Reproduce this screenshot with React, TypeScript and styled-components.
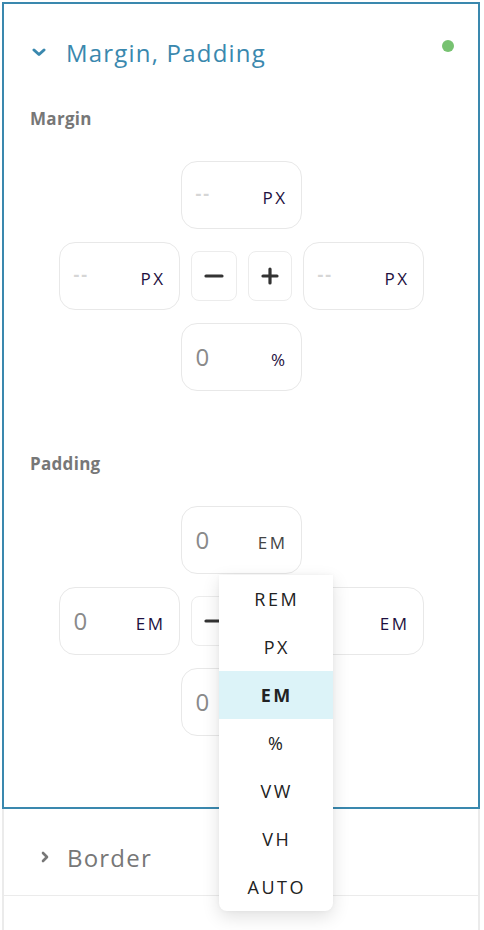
import React from "react";
import styled, { createGlobalStyle } from "styled-components";

const GlobalStyle = createGlobalStyle`
  html, body {
    margin: 0;
    padding: 0;
    background: #fff;
  }
  body {
    font-family: "Open Sans", "Noto Sans", sans-serif;
  }
`;

type Side = { value: string; unit: string; muted?: boolean };

const units = ["REM", "PX", "EM", "%", "VW", "VH", "AUTO"];

function ChevronDown() {
  return (
    <svg width="14" height="10" viewBox="0 0 14 10">
      <polyline points="2,3 7,7.5 12,3" fill="none" stroke="#3a88ae" strokeWidth="3" strokeLinecap="round" strokeLinejoin="round" />
    </svg>
  );
}

function ChevronRight() {
  return (
    <svg width="10" height="14" viewBox="0 0 10 14">
      <polyline points="3,3 7,7 3,11" fill="none" stroke="#777" strokeWidth="2.6" strokeLinecap="round" strokeLinejoin="round" />
    </svg>
  );
}

function ValueBox({ side }: { side: Side }) {
  const empty = side.value === "--";
  return (
    <Box>
      <Value empty={empty}>{side.value}</Value>
      <Unit muted={side.muted}>{side.unit}</Unit>
    </Box>
  );
}

function SpacingControl({ top, left, right, bottom, menu }: { top: Side; left: Side; right: Side; bottom: Side; menu?: boolean }) {
  return (
    <Cross>
      <TopSlot>
        <ValueBox side={top} />
        {menu && (
          <Menu>
            {units.map((u) => (
              <MenuItem key={u} active={u === "EM"}>
                {u}
              </MenuItem>
            ))}
          </Menu>
        )}
      </TopSlot>
      <MiddleRow>
        <ValueBox side={left} />
        <StepButton>
          <svg width="20" height="20" viewBox="0 0 20 20">
            <line x1="2" y1="10" x2="18" y2="10" stroke="#333" strokeWidth="3.2" strokeLinecap="round" />
          </svg>
        </StepButton>
        <StepButton narrow>
          <svg width="20" height="20" viewBox="0 0 20 20">
            <line x1="3" y1="10" x2="17" y2="10" stroke="#333" strokeWidth="3.2" strokeLinecap="round" />
            <line x1="10" y1="3" x2="10" y2="17" stroke="#333" strokeWidth="3.2" strokeLinecap="round" />
          </svg>
        </StepButton>
        <ValueBox side={right} />
      </MiddleRow>
      <ValueBox side={bottom} />
    </Cross>
  );
}

export default function App() {
  return (
    <Page>
      <GlobalStyle />
      <ActiveSection>
        <Header>
          <ChevronDown />
          <Title>Margin, Padding</Title>
          <Dot />
        </Header>
        <Label>Margin</Label>
        <SpacingControl
          top={{ value: "--", unit: "PX" }}
          left={{ value: "--", unit: "PX" }}
          right={{ value: "--", unit: "PX" }}
          bottom={{ value: "0", unit: "%" }}
        />
        <Label padded>Padding</Label>
        <SpacingControl
          menu
          top={{ value: "0", unit: "EM", muted: true }}
          left={{ value: "0", unit: "EM" }}
          right={{ value: "0", unit: "EM" }}
          bottom={{ value: "0", unit: "" }}
        />
      </ActiveSection>
      <Row>
        <ChevronRight />
        <RowTitle>Border</RowTitle>
      </Row>
      <Row />
    </Page>
  );
}

const Page = styled.div`
  padding: 2px 4px 0 2px;
  height: 928px;
  overflow: hidden;
`;

const ActiveSection = styled.section`
  position: relative;
  height: 803px;
  border: 2px solid #3a88ae;
`;

const Header = styled.div`
  display: flex;
  align-items: center;
  height: 96px;
  padding: 0 24px 0 28px;
  box-sizing: border-box;
  svg {
    flex: none;
  }
`;

const Title = styled.h2`
  margin: 0 0 0 20px;
  flex: 1;
  font-size: 24px;
  font-weight: 400;
  color: #3a88ae;
  letter-spacing: 1.2px;
`;

const Dot = styled.span`
  width: 12px;
  height: 12px;
  border-radius: 50%;
  background: #77c271;
  margin-top: -12px;
`;

const Label = styled.h3<{ padded?: boolean }>`
  margin: 0 0 0 26px;
  height: 28px;
  line-height: 28px;
  font-size: 17px;
  font-weight: 700;
  color: #777;
  letter-spacing: 0.3px;
  margin-top: ${(p) => (p.padded ? "59px" : "5px")};
`;

const Cross = styled.div`
  display: flex;
  flex-direction: column;
  align-items: center;
  gap: 13px;
  margin-top: 28px;
`;

const TopSlot = styled.div`
  position: relative;
`;

const MiddleRow = styled.div`
  display: flex;
  align-items: center;
  gap: 11px;
`;

const Box = styled.div`
  display: flex;
  align-items: center;
  justify-content: space-between;
  width: 121px;
  height: 68px;
  padding: 0 15px 0 14px;
  box-sizing: border-box;
  border: 1.5px solid #e8e8e8;
  border-radius: 16px;
  background: #fff;
`;

const Value = styled.span<{ empty: boolean }>`
  font-size: ${(p) => (p.empty ? "18px" : "24px")};
  font-weight: ${(p) => (p.empty ? 700 : 400)};
  color: ${(p) => (p.empty ? "#d6d6d6" : "#8a8a8a")};
  letter-spacing: ${(p) => (p.empty ? "2px" : "0")};
  margin-top: ${(p) => (p.empty ? "-4px" : "-2px")};
`;

const Unit = styled.span<{ muted?: boolean }>`
  font-size: 17px;
  letter-spacing: 2.5px;
  margin-right: -2px;
  color: ${(p) => (p.muted ? "#444" : "#1e1040")};
  margin-top: 4px;
`;

const StepButton = styled.button<{ narrow?: boolean }>`
  display: flex;
  align-items: center;
  justify-content: center;
  width: ${(p) => (p.narrow ? "44px" : "46px")};
  height: 50px;
  padding: 0;
  border: 1.5px solid #ececec;
  border-radius: 8px;
  background: #fff;
`;

const Menu = styled.ul`
  position: absolute;
  top: 69px;
  left: 38px;
  z-index: 5;
  width: 114px;
  margin: 0;
  padding: 0;
  list-style: none;
  background: #fff;
  border-radius: 0 0 8px 8px;
  box-shadow: 0 6px 18px rgba(0, 0, 0, 0.12), 0 0 4px rgba(0, 0, 0, 0.04);
`;

const MenuItem = styled.li<{ active?: boolean }>`
  height: 48px;
  line-height: 48px;
  text-align: center;
  font-size: 18px;
  letter-spacing: 2.5px;
  padding-left: 2.5px;
  color: #222;
  font-weight: ${(p) => (p.active ? 700 : 400)};
  background: ${(p) => (p.active ? "#dcf3f8" : "transparent")};
`;

const Row = styled.div`
  display: flex;
  align-items: center;
  height: 87px;
  padding: 10px 0 0 36px;
  box-sizing: border-box;
  border-left: 2px solid #ebebeb;
  border-right: 2px solid #ebebeb;
  border-bottom: 1.5px solid #ebebeb;
`;

const RowTitle = styled.span`
  margin-left: 17px;
  font-size: 24px;
  color: #777;
  letter-spacing: 1.2px;
`;
